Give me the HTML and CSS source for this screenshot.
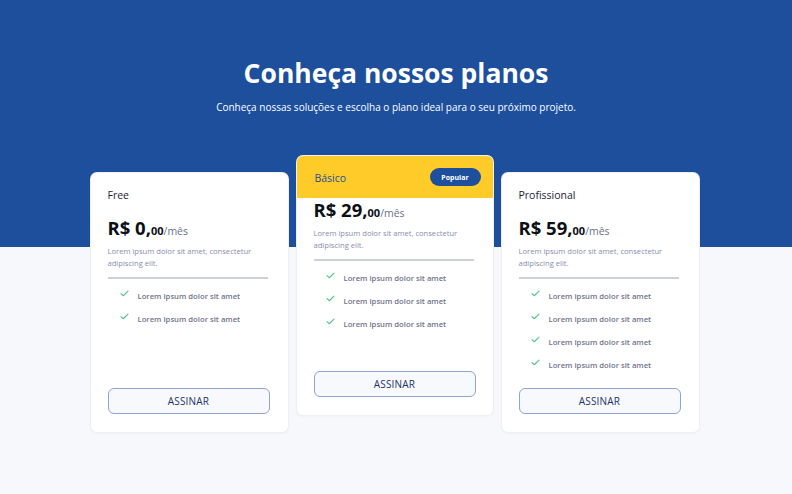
FILE: index.html
```html
<!DOCTYPE html>
<html lang="pt-BR">
<head>
<meta charset="utf-8">
<title>Planos</title>
<link rel="stylesheet" href="styles.css">
</head>
<body>
<main class="page">
  <header class="hero">
    <h1 class="hero-title">Conheça nossos planos</h1>
    <p class="hero-sub">Conheça nossas soluções e escolha o plano ideal para o seu próximo projeto.</p>
  </header>
  <section class="plans">
    <article class="card">
      <div class="card-head"><span class="plan-name">Free</span></div>
      <div class="card-body">
        <p class="price"><span class="amount">R$ 0,</span><span class="cents">00</span><span class="per">/mês</span></p>
        <p class="desc">Lorem ipsum dolor sit amet, consectetur adipiscing elit.</p>
        <hr class="divider">
        <ul class="features">
          <li><svg class="check" viewBox="0 0 10 8"><polyline points="1,4.2 3.6,6.6 9,1.2"/></svg><span>Lorem ipsum dolor sit amet</span></li>
          <li><svg class="check" viewBox="0 0 10 8"><polyline points="1,4.2 3.6,6.6 9,1.2"/></svg><span>Lorem ipsum dolor sit amet</span></li>
        </ul>
        <button class="btn">ASSINAR</button>
      </div>
    </article>
    <article class="card card-featured">
      <div class="card-head head-featured"><span class="plan-name plan-name-featured">Básico</span><span class="badge">Popular</span></div>
      <div class="card-body">
        <p class="price"><span class="amount">R$ 29,</span><span class="cents">00</span><span class="per">/mês</span></p>
        <p class="desc">Lorem ipsum dolor sit amet, consectetur adipiscing elit.</p>
        <hr class="divider">
        <ul class="features">
          <li><svg class="check" viewBox="0 0 10 8"><polyline points="1,4.2 3.6,6.6 9,1.2"/></svg><span>Lorem ipsum dolor sit amet</span></li>
          <li><svg class="check" viewBox="0 0 10 8"><polyline points="1,4.2 3.6,6.6 9,1.2"/></svg><span>Lorem ipsum dolor sit amet</span></li>
          <li><svg class="check" viewBox="0 0 10 8"><polyline points="1,4.2 3.6,6.6 9,1.2"/></svg><span>Lorem ipsum dolor sit amet</span></li>
        </ul>
        <button class="btn">ASSINAR</button>
      </div>
    </article>
    <article class="card">
      <div class="card-head"><span class="plan-name">Profissional</span></div>
      <div class="card-body">
        <p class="price"><span class="amount">R$ 59,</span><span class="cents">00</span><span class="per">/mês</span></p>
        <p class="desc">Lorem ipsum dolor sit amet, consectetur adipiscing elit.</p>
        <hr class="divider">
        <ul class="features">
          <li><svg class="check" viewBox="0 0 10 8"><polyline points="1,4.2 3.6,6.6 9,1.2"/></svg><span>Lorem ipsum dolor sit amet</span></li>
          <li><svg class="check" viewBox="0 0 10 8"><polyline points="1,4.2 3.6,6.6 9,1.2"/></svg><span>Lorem ipsum dolor sit amet</span></li>
          <li><svg class="check" viewBox="0 0 10 8"><polyline points="1,4.2 3.6,6.6 9,1.2"/></svg><span>Lorem ipsum dolor sit amet</span></li>
          <li><svg class="check" viewBox="0 0 10 8"><polyline points="1,4.2 3.6,6.6 9,1.2"/></svg><span>Lorem ipsum dolor sit amet</span></li>
        </ul>
        <button class="btn">ASSINAR</button>
      </div>
    </article>
  </section>
</main>
</body>
</html>
```

FILE: styles.css
```css
* { box-sizing: border-box; }

html, body {
  margin: 0;
  padding: 0;
}

body {
  font-family: "Open Sans", "Noto Sans", sans-serif;
  background: linear-gradient(to bottom, #1d4f9c 0, #1d4f9c 247px, #f7f8fb 247px, #f7f8fb 100%);
  min-height: 494px;
}

.page {
  display: flex;
  flex-direction: column;
  align-items: center;
  padding-top: 56px;
}

.hero {
  display: flex;
  flex-direction: column;
  align-items: center;
  color: #fff;
}

.hero-title {
  margin: 0;
  font-size: 26.5px;
  line-height: 34px;
  font-weight: 700;
}

.hero-sub {
  margin: 10px 0 0;
  font-size: 10px;
  line-height: 14px;
  font-weight: 500;
}

.plans {
  display: flex;
  align-items: stretch;
  gap: 9px;
  margin-top: 59px;
  margin-left: -3px;
}

.card {
  width: 197px;
  display: flex;
  flex-direction: column;
  background: #fff;
  border-radius: 6px;
  box-shadow: 0 0 0 1px #edeff3, 0 1px 3px rgba(30, 40, 70, 0.06);
}

.card-featured {
  width: 196px;
  margin-top: -17px;
  margin-bottom: 17px;
}

.card-head {
  height: 44px;
  display: flex;
  align-items: center;
  justify-content: space-between;
  padding: 0 12px 0 17px;
  border-radius: 6px 6px 0 0;
}

.head-featured {
  height: 42px;
  background: #ffcb29;
  padding-left: 18px;
}

.plan-name {
  font-size: 10.5px;
  font-weight: 500;
  color: #1d2233;
}

.plan-name-featured {
  color: #1d4f9c;
  margin-top: 1px;
}

.badge {
  display: flex;
  align-items: center;
  justify-content: center;
  width: 51px;
  height: 18px;
  border-radius: 9px;
  background: #1d4f9c;
  color: #fff;
  font-size: 7px;
  font-weight: 700;
}

.card-body {
  flex: 1;
  display: flex;
  flex-direction: column;
  padding: 0 17px 18px 17px;
}

.head-featured + .card-body {
  padding-top: 1px;
  padding-left: 17px;
}

.price {
  margin: 0;
  height: 22px;
  display: flex;
  align-items: baseline;
  color: #0d0f17;
  line-height: 22px;
}

.amount {
  font-size: 18.5px;
  font-weight: 700;
}

.cents {
  font-size: 11px;
  font-weight: 700;
}

.per {
  font-size: 10.5px;
  color: #6c7186;
}

.desc {
  margin: 6px 0 0;
  font-size: 7.6px;
  line-height: 12px;
  color: #878dae;
}

.divider {
  margin: 8px 0 0;
  border: 0;
  height: 2px;
  background: #cdd0d8;
  width: 160px;
}

.features {
  list-style: none;
  margin: 0;
  padding: 11px 0 17px 12px;
  display: flex;
  flex-direction: column;
  gap: 11px;
}

.features li {
  display: flex;
  align-items: center;
  height: 12px;
  font-size: 7.7px;
  font-weight: 600;
  color: #6f748a;
}

.check {
  width: 9px;
  height: 7px;
  margin-right: 9px;
  margin-top: -5px;
  fill: none;
  stroke: #52c48f;
  stroke-width: 1.3;
  stroke-linecap: round;
  stroke-linejoin: round;
}

.btn {
  margin-top: auto;
  width: 162px;
  height: 26px;
  border: 1px solid #8fa4cf;
  border-radius: 6px;
  background: #f8f9fc;
  color: #1d3566;
  font-family: "Open Sans", "Noto Sans", sans-serif;
  font-size: 10px;
  letter-spacing: 0.2px;
  padding: 0;
}
```
